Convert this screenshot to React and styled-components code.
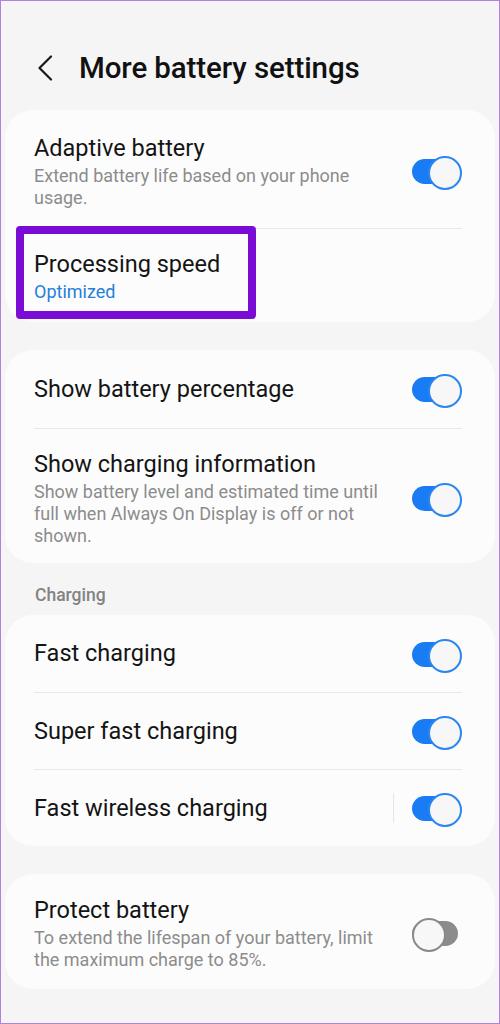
import React from 'react';
import styled, { createGlobalStyle } from 'styled-components';

const GlobalStyle = createGlobalStyle`
  html, body {
    margin: 0;
    padding: 0;
    background: #f5f5f5;
  }
  * { box-sizing: border-box; }
`;

const Screen = styled.div`
  width: 500px;
  height: 1024px;
  border: 1px solid #b47fe3;
  background: #f5f5f5;
  font-family: Roboto, "Noto Sans", sans-serif;
  color: #111;
  overflow: hidden;
`;

const Header = styled.header`
  display: flex;
  align-items: center;
  height: 109px;
  padding: 25px 0 0 33px;
`;

const BackButton = styled.button`
  display: flex;
  align-items: center;
  justify-content: center;
  width: 22px;
  height: 30px;
  padding: 0;
  margin-right: 23px;
  border: 0;
  background: none;
`;

const Title = styled.h1`
  margin: 0;
  font-size: 29.5px;
  font-weight: 500;
  letter-spacing: -0.1px;
`;

const Card = styled.section`
  position: relative;
  margin: 0 4px ${p => p.gap || 0}px 4px;
  background: #fcfcfc;
  border-radius: 28px;
  padding: 0 33px 0 29px;
`;

const Row = styled.div`
  position: relative;
  display: flex;
  align-items: center;
  min-height: ${p => p.h || 77}px;
  padding: ${p => p.pad || '0'};
  & + & {
    border-top: 1px solid #e8e8e8;
  }
`;

const Text = styled.div`
  flex: 1;
  padding-right: ${p => p.pr || 40}px;
`;

const Name = styled.div`
  font-size: 23.5px;
  line-height: 29px;
  color: #141414;
`;

const Desc = styled.div`
  margin-top: 2px;
  font-size: 18px;
  line-height: 22px;
  color: ${p => (p.accent ? '#2680d9' : '#8c8c8c')};
`;

const Split = styled.span`
  width: 1px;
  height: 30px;
  background: #e6e6e6;
  margin-right: 18px;
`;

const Switch = styled.span`
  position: relative;
  flex: none;
  width: 50px;
  height: 30px;
  &::before {
    content: '';
    position: absolute;
    left: 0;
    right: 4px;
    top: 3px;
    height: 25px;
    border-radius: 13px;
    background: ${p => (p.on ? '#1a7cf5' : '#8c8c8c')};
  }
  &::after {
    content: '';
    position: absolute;
    top: 0;
    ${p => (p.on ? 'right: 0;' : 'left: 0;')}
    width: 30px;
    height: 30px;
    border-radius: 50%;
    background: #f7f7f7;
    border: 2px solid ${p => (p.on ? '#2a86f0' : '#8a8a8a')};
  }
`;

const Section = styled.div`
  padding: 22px 0 9px 34px;
  font-size: 17.5px;
  line-height: 21px;
  font-weight: 500;
  color: #838383;
`;

const Highlight = styled.div`
  position: absolute;
  left: -18px;
  top: -3px;
  width: 240px;
  height: 93px;
  border: 8px solid #7b0cd6;
  border-radius: 4px;
  pointer-events: none;
`;

function Setting({ name, desc, on, accent, split, h, pad, pr, children }) {
  return (
    <Row h={h} pad={pad}>
      <Text pr={pr}>
        <Name>{name}</Name>
        {desc && <Desc accent={accent}>{desc}</Desc>}
      </Text>
      {split && <Split />}
      {on !== undefined && <Switch on={on} />}
      {children}
    </Row>
  );
}

export default function App() {
  return (
    <Screen>
      <GlobalStyle />
      <Header>
        <BackButton aria-label="Back">
          <svg width="16" height="26" viewBox="0 0 16 26" fill="none">
            <path d="M14 1.5 L2.5 13 L14 24.5" stroke="#1a1a1a" strokeWidth="2.2" strokeLinecap="round" strokeLinejoin="round" />
          </svg>
        </BackButton>
        <Title>More battery settings</Title>
      </Header>

      <Card gap={28}>
        <Setting
          name="Adaptive battery"
          desc="Extend battery life based on your phone usage."
          on
          h={118}
          pad="10px 0 6px"
        />
        <Row h={94} pad="2px 0 0">
          <Text>
            <Name>Processing speed</Name>
            <Desc accent>Optimized</Desc>
          </Text>
          <Highlight />
        </Row>
      </Card>

      <Card>
        <Setting name="Show battery percentage" on h={78} />
        <Setting
          name="Show charging information"
          desc="Show battery level and estimated time until full when Always On Display is off or not shown."
          on
          h={135}
          pad="8px 0 4px"
          pr={30}
        />
      </Card>

      <Section>Charging</Section>

      <Card gap={28}>
        <Setting name="Fast charging" on />
        <Setting name="Super fast charging" on />
        <Setting name="Fast wireless charging" on split />
      </Card>

      <Card>
        <Setting
          name="Protect battery"
          desc="To extend the lifespan of your battery, limit the maximum charge to 85%."
          on={false}
          h={115}
          pad="3px 0 0"
          pr={30}
        />
      </Card>
    </Screen>
  );
}
